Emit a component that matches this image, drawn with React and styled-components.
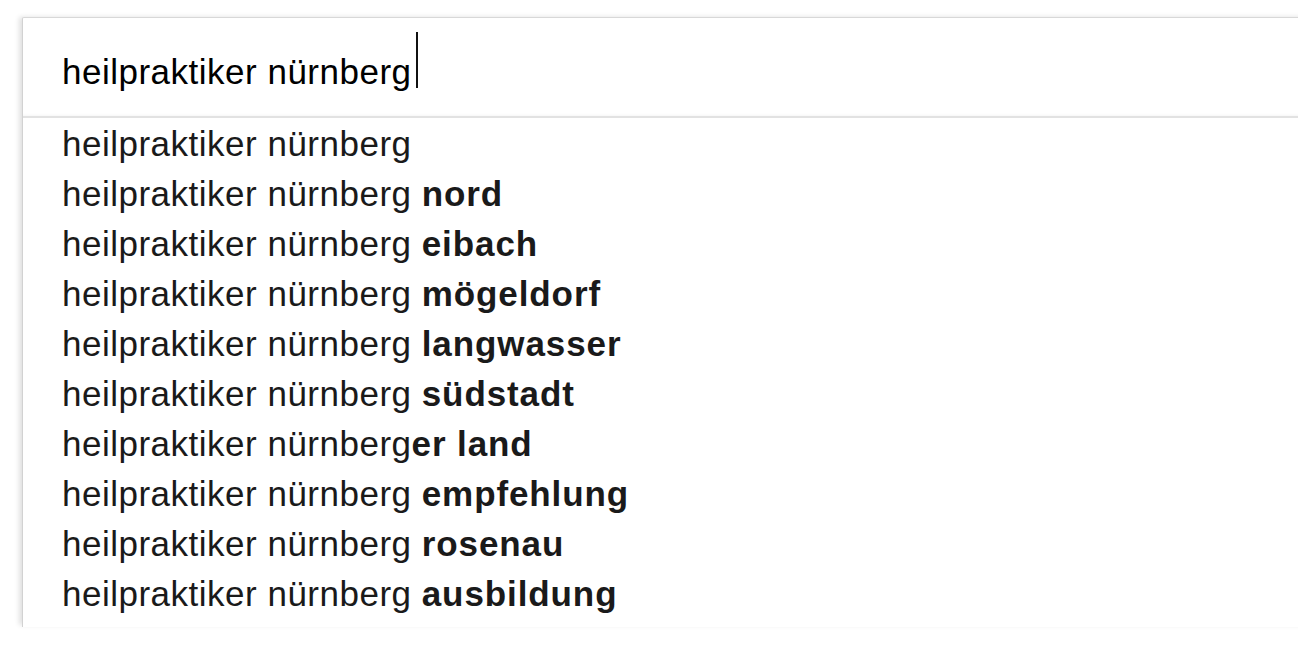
import React from 'react';
import styled, { createGlobalStyle } from 'styled-components';

const GlobalStyle = createGlobalStyle`
  html, body {
    margin: 0;
    padding: 0;
    background: #fff;
    overflow: hidden;
  }
  body {
    font-family: "Liberation Sans", Arial, Helvetica, sans-serif;
  }
`;

const Page = styled.div`
  width: 1298px;
  height: 660px;
  padding: 17px 0 0 22px;
  box-sizing: border-box;
  overflow: hidden;
`;

const SearchBox = styled.div`
  width: 1400px;
  background: #fff;
  border-top: 1px solid #d8d8d8;
  border-left: 1px solid #d2d2d2;
  border-top-left-radius: 2px;
  box-shadow: -4px -1px 5px -1px rgba(0, 0, 0, 0.12);
`;

const InputRow = styled.div`
  height: 98px;
  display: flex;
  align-items: flex-start;
  padding-left: 39px;
  border-bottom: 2px solid #e2e2e2;
  box-shadow: inset 0 -3px 3px -2px rgba(0, 0, 0, 0.04);
`;

const InputText = styled.span`
  font-size: 35px;
  letter-spacing: 0.5px;
  color: #000;
  line-height: 35px;
  margin-top: 36px;
`;

const Caret = styled.span`
  width: 2px;
  height: 56px;
  background: #111;
  margin: 14px 0 0 4px;
`;

const List = styled.ul`
  list-style: none;
  margin: 0;
  padding: 0 0 8px 39px;
`;

const Item = styled.li`
  height: 50px;
  line-height: 50px;
  font-size: 35px;
  letter-spacing: 0.5px;
  color: #1a1a1a;
  margin-top: ${(p) => (p.$first ? '1px' : '0')};
  white-space: nowrap;
`;

const Completion = styled.b`
  font-weight: 700;
  letter-spacing: 0.9px;
  color: #1a1a1a;
`;

const query = 'heilpraktiker nürnberg';

const suggestions = [
  { base: query, rest: '' },
  { base: query + ' ', rest: 'nord' },
  { base: query + ' ', rest: 'eibach' },
  { base: query + ' ', rest: 'mögeldorf' },
  { base: query + ' ', rest: 'langwasser' },
  { base: query + ' ', rest: 'südstadt' },
  { base: query, rest: 'er land' },
  { base: query + ' ', rest: 'empfehlung' },
  { base: query + ' ', rest: 'rosenau' },
  { base: query + ' ', rest: 'ausbildung' },
];

export default function App() {
  return (
    <>
      <GlobalStyle />
      <Page>
        <SearchBox>
          <InputRow>
            <InputText>{query}</InputText>
            <Caret />
          </InputRow>
          <List>
            {suggestions.map((s, i) => (
              <Item key={i} $first={i === 0}>
                {s.base}
                {s.rest && <Completion>{s.rest}</Completion>}
              </Item>
            ))}
          </List>
        </SearchBox>
      </Page>
    </>
  );
}
